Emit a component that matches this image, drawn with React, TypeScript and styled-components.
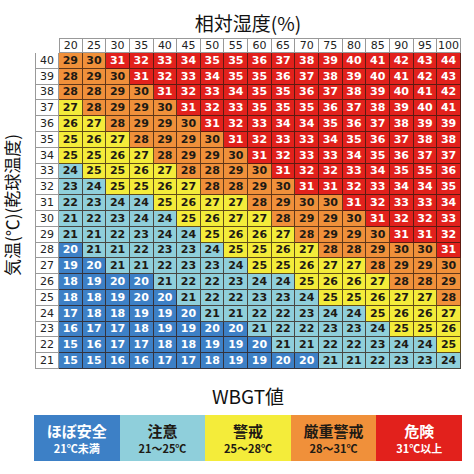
import React from "react";
import styled, { createGlobalStyle } from "styled-components";

const GlobalStyle = createGlobalStyle`
	body {
		margin: 0;
		background: #fff;
		font-family: "DejaVu Sans", "Noto Sans CJK JP", sans-serif;
	}
`;

const HUMIDITY = [20, 25, 30, 35, 40, 45, 50, 55, 60, 65, 70, 75, 80, 85, 90, 95, 100];

// 気温 40 → 21
const ROWS: [number, number[]][] = [
	[40, [29, 30, 31, 32, 33, 34, 35, 35, 36, 37, 38, 39, 40, 41, 42, 43, 44]],
	[39, [28, 29, 30, 31, 32, 33, 34, 35, 35, 36, 37, 38, 39, 40, 41, 42, 43]],
	[38, [28, 28, 29, 30, 31, 32, 33, 34, 35, 35, 36, 37, 38, 39, 40, 41, 42]],
	[37, [27, 28, 29, 29, 30, 31, 32, 33, 35, 35, 35, 36, 37, 38, 39, 40, 41]],
	[36, [26, 27, 28, 29, 29, 30, 31, 32, 33, 34, 34, 35, 36, 37, 38, 39, 39]],
	[35, [25, 26, 27, 28, 29, 29, 30, 31, 32, 33, 33, 34, 35, 36, 37, 38, 38]],
	[34, [25, 25, 26, 27, 28, 29, 29, 30, 31, 32, 33, 33, 34, 35, 36, 37, 37]],
	[33, [24, 25, 25, 26, 27, 28, 28, 29, 30, 31, 32, 32, 33, 34, 35, 35, 36]],
	[32, [23, 24, 25, 25, 26, 27, 28, 28, 29, 30, 31, 31, 32, 33, 34, 34, 35]],
	[31, [22, 23, 24, 24, 25, 26, 27, 27, 28, 29, 30, 30, 31, 32, 33, 33, 34]],
	[30, [21, 22, 23, 24, 24, 25, 26, 27, 27, 28, 29, 29, 30, 31, 32, 32, 33]],
	[29, [21, 21, 22, 23, 24, 24, 25, 26, 26, 27, 28, 29, 29, 30, 31, 31, 32]],
	[28, [20, 21, 21, 22, 23, 23, 24, 25, 25, 26, 27, 28, 28, 29, 30, 30, 31]],
	[27, [19, 20, 21, 21, 22, 23, 23, 24, 25, 25, 26, 27, 27, 28, 29, 29, 30]],
	[26, [18, 19, 20, 20, 21, 22, 22, 23, 24, 24, 25, 26, 26, 27, 28, 28, 29]],
	[25, [18, 18, 19, 20, 20, 21, 22, 22, 23, 23, 24, 25, 25, 26, 27, 27, 28]],
	[24, [17, 18, 18, 19, 19, 20, 21, 21, 22, 22, 23, 24, 24, 25, 26, 26, 27]],
	[23, [16, 17, 17, 18, 19, 19, 20, 20, 21, 22, 22, 23, 23, 24, 25, 25, 26]],
	[22, [15, 16, 17, 17, 18, 18, 19, 19, 20, 21, 21, 22, 22, 23, 24, 24, 25]],
	[21, [15, 15, 16, 16, 17, 17, 18, 19, 19, 20, 20, 21, 21, 22, 23, 23, 24]],
];

type Level = "safe" | "caution" | "warning" | "severe" | "danger";

const LEVEL_BG: Record<Level, string> = {
	safe: "#3d80c6",
	caution: "#8fcfdb",
	warning: "#f4ec3a",
	severe: "#f0903a",
	danger: "#e2211c",
};

const levelOf = (v: number): Level => {
	if (v >= 31) return "danger";
	if (v >= 28) return "severe";
	if (v >= 25) return "warning";
	if (v >= 21) return "caution";
	return "safe";
};

const isLight = (l: Level) => l === "safe" || l === "danger";

const Page = styled.div`
	width: 474px;
	height: 474px;
	display: flex;
	flex-direction: column;
	padding-top: 10px;
	box-sizing: border-box;
	overflow: hidden;
`;

const Caption = styled.div<{ $top?: number }>`
	margin-left: 35px;
	width: 426px;
	margin-top: ${({ $top }) => $top || 0}px;
	text-align: center;
	font-family: "Noto Sans CJK JP", sans-serif;
	font-size: 19px;
	line-height: 26px;
	color: #111;
`;

const Body = styled.div`
	display: flex;
	align-items: center;
	margin-top: 2px;
`;

const SideLabel = styled.div`
	width: 35px;
	padding-left: 3px;
	box-sizing: border-box;
	display: flex;
	justify-content: center;
	font-family: "Noto Sans CJK JP", sans-serif;
	font-size: 17px;
	line-height: 24px;
	color: #111;
	writing-mode: vertical-rl;
	text-orientation: sideways;
	transform: rotate(180deg);
	white-space: nowrap;
	margin-top: 4px;
`;

const Grid = styled.div`
	display: grid;
	grid-template-columns: 24px repeat(17, 23.65px);
	grid-template-rows: 15px repeat(20, 15.8px);
`;

const Corner = styled.div``;

const HeadCell = styled.div<{ $first?: boolean }>`
	box-sizing: border-box;
	background: #fff;
	border-top: 1px solid #999;
	border-right: 1px solid #999;
	border-bottom: 1px solid #999;
	border-left: ${({ $first }) => ($first ? "1px solid #999" : "0")};
	display: flex;
	align-items: center;
	justify-content: center;
	font-size: 11px;
	color: #222;
`;

const RowLabel = styled.div`
	box-sizing: border-box;
	background: #fff;
	border-left: 1px solid #999;
	border-right: 1px solid #999;
	border-bottom: 1px solid #999;
	display: flex;
	align-items: center;
	justify-content: center;
	font-size: 11px;
	color: #222;
`;

const ValueCell = styled.div<{ $level: Level }>`
	box-sizing: border-box;
	background: ${({ $level }) => LEVEL_BG[$level]};
	color: ${({ $level }) => (isLight($level) ? "#fff" : "#1e1a14")};
	border-right: 1px solid rgba(50, 25, 15, 0.75);
	border-bottom: 1px solid rgba(50, 25, 15, 0.75);
	display: flex;
	align-items: center;
	justify-content: center;
	font-size: 11px;
	font-weight: bold;
`;

const Legend = styled.div`
	margin-left: 34px;
	margin-top: 6px;
	width: 428px;
	height: 46px;
	display: grid;
	grid-template-columns: repeat(5, 1fr);
`;

const LegendItem = styled.div<{ $level: Level }>`
	background: ${({ $level }) => LEVEL_BG[$level]};
	color: ${({ $level }) => (isLight($level) ? "#fff" : "#1e1a14")};
	display: flex;
	flex-direction: column;
	align-items: center;
	justify-content: center;
	font-family: "Noto Sans CJK JP", sans-serif;
	font-weight: bold;
	padding-top: 1px;
`;

const LegendName = styled.div`
	font-size: 15px;
	line-height: 20px;
`;

const LegendRange = styled.div`
	font-size: 11px;
	line-height: 15px;
`;

const LEGEND: { level: Level; name: string; range: string }[] = [
	{ level: "safe", name: "ほぼ安全", range: "21℃未満" },
	{ level: "caution", name: "注意", range: "21～25℃" },
	{ level: "warning", name: "警戒", range: "25～28℃" },
	{ level: "severe", name: "厳重警戒", range: "28～31℃" },
	{ level: "danger", name: "危険", range: "31℃以上" },
];

const App = () => {
	return (
		<Page>
			<GlobalStyle />
			<Caption>相対湿度(%)</Caption>
			<Body>
				<SideLabel>気温(℃)(乾球温度)</SideLabel>
				<Grid>
					<Corner />
					{HUMIDITY.map((h, i) => (
						<HeadCell key={h} $first={i === 0}>
							{h}
						</HeadCell>
					))}
					{ROWS.map(([temp, values]) => (
						<React.Fragment key={temp}>
							<RowLabel>{temp}</RowLabel>
							{values.map((v, i) => (
								<ValueCell key={i} $level={levelOf(v)}>
									{v}
								</ValueCell>
							))}
						</React.Fragment>
					))}
				</Grid>
			</Body>
			<Caption $top={14}>WBGT値</Caption>
			<Legend>
				{LEGEND.map((l) => (
					<LegendItem key={l.level} $level={l.level}>
						<LegendName>{l.name}</LegendName>
						<LegendRange>{l.range}</LegendRange>
					</LegendItem>
				))}
			</Legend>
		</Page>
	);
};

export default App;
